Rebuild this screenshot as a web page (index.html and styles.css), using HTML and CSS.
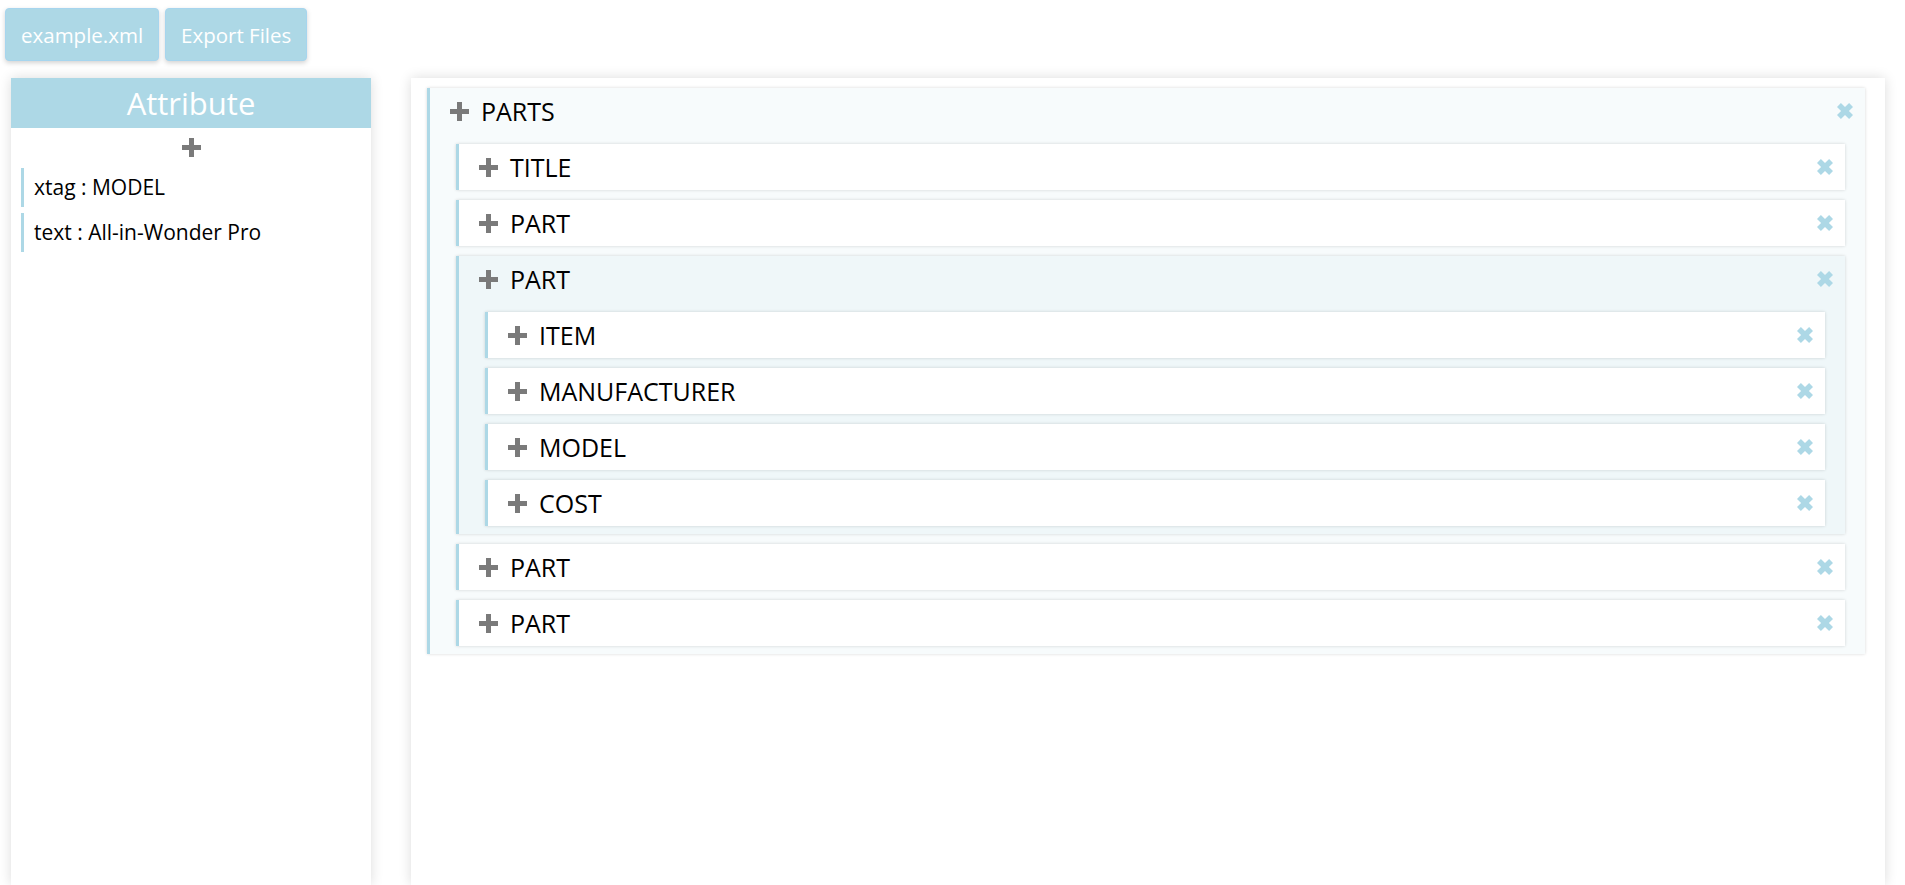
FILE: index.html
```html
<!DOCTYPE html>
<html>
<head>
<meta charset="utf-8">
<link rel="stylesheet" href="styles.css">
</head>
<body>
<svg width="0" height="0" class="defs">
  <defs>
    <symbol id="plus" viewBox="0 0 19 19"><path d="M7 0h5v7h7v5h-7v7h-5v-7h-7v-5h7z"/></symbol>
    <symbol id="close" viewBox="0 0 16 16"><path d="M0 3.9L3.9 0L8 4.1L12.1 0L16 3.9L11.9 8L16 12.1L12.1 16L8 11.9L3.9 16L0 12.1L4.1 8z"/></symbol>
  </defs>
</svg>
<div class="toolbar">
  <button class="btn">example.xml</button>
  <button class="btn">Export Files</button>
</div>
<div class="main">
  <aside class="attr-panel">
    <div class="attr-head">Attribute</div>
    <div class="attr-add"><svg class="ico-plus"><use href="#plus"/></svg></div>
    <div class="attr-row">xtag : MODEL</div>
    <div class="attr-row">text : All-in-Wonder Pro</div>
  </aside>
  <section class="tree-panel">
    <div class="node open">
      <div class="node-head"><svg class="ico-plus"><use href="#plus"/></svg><span class="label">PARTS</span><svg class="ico-close"><use href="#close"/></svg></div>
      <div class="children">
        <div class="node"><div class="node-head"><svg class="ico-plus"><use href="#plus"/></svg><span class="label">TITLE</span><svg class="ico-close"><use href="#close"/></svg></div></div>
        <div class="node"><div class="node-head"><svg class="ico-plus"><use href="#plus"/></svg><span class="label">PART</span><svg class="ico-close"><use href="#close"/></svg></div></div>
        <div class="node open">
          <div class="node-head"><svg class="ico-plus"><use href="#plus"/></svg><span class="label">PART</span><svg class="ico-close"><use href="#close"/></svg></div>
          <div class="children">
            <div class="node"><div class="node-head"><svg class="ico-plus"><use href="#plus"/></svg><span class="label">ITEM</span><svg class="ico-close"><use href="#close"/></svg></div></div>
            <div class="node"><div class="node-head"><svg class="ico-plus"><use href="#plus"/></svg><span class="label">MANUFACTURER</span><svg class="ico-close"><use href="#close"/></svg></div></div>
            <div class="node"><div class="node-head"><svg class="ico-plus"><use href="#plus"/></svg><span class="label">MODEL</span><svg class="ico-close"><use href="#close"/></svg></div></div>
            <div class="node"><div class="node-head"><svg class="ico-plus"><use href="#plus"/></svg><span class="label">COST</span><svg class="ico-close"><use href="#close"/></svg></div></div>
          </div>
        </div>
        <div class="node"><div class="node-head"><svg class="ico-plus"><use href="#plus"/></svg><span class="label">PART</span><svg class="ico-close"><use href="#close"/></svg></div></div>
        <div class="node"><div class="node-head"><svg class="ico-plus"><use href="#plus"/></svg><span class="label">PART</span><svg class="ico-close"><use href="#close"/></svg></div></div>
      </div>
    </div>
  </section>
</div>
</body>
</html>
```
FILE: styles.css
```css
* { box-sizing: border-box; }
html, body { margin: 0; padding: 0; background: #fff; }
body {
  font-family: "Open Sans", "Noto Sans", sans-serif;
  color: #000;
  overflow: hidden;
}
.defs { position: absolute; width: 0; height: 0; }

.toolbar {
  display: flex;
  gap: 6px;
  padding: 8px 0 0 5px;
}
.btn {
  font-family: inherit;
  font-size: 20.5px;
  color: #fff;
  background: #add8e6;
  border: 1px solid #a6d5ee;
  border-radius: 4px;
  height: 53px;
  padding: 0 15px;
  box-shadow: 0 2px 5px rgba(0,0,0,0.18);
}

.main {
  display: flex;
  gap: 40px;
  margin-top: 17px;
  padding-left: 11px;
  padding-right: 20px;
}
.attr-panel {
  width: 360px;
  flex: none;
  min-height: 807px;
  background: #fff;
  box-shadow: 0 0 12px rgba(0,0,0,0.14);
}
.attr-head {
  height: 50px;
  background: #add8e6;
  color: #fff;
  font-size: 31px;
  text-align: center;
  line-height: 50px;
}
.attr-add {
  display: flex;
  justify-content: center;
  padding: 10px 0 10px;
  height: 40px;
}
.attr-row {
  margin: 0 0 6px 10px;
  border-left: 3px solid #add8e6;
  height: 39px;
  line-height: 39px;
  padding-left: 10px;
  font-size: 21px;
}

.tree-panel {
  flex: 1;
  min-height: 807px;
  background: #fff;
  box-shadow: 0 0 12px rgba(0,0,0,0.14);
  padding: 10px 20px 0 16px;
}

.node {
  background: #fff;
  border-left: 3px solid #add8e6;
  box-shadow: 0 0 3px rgba(0,0,0,0.16);
}
.children > .node { margin-top: 10px; }
.node.open { background: rgba(173,216,230,0.1); }
.node-head {
  height: 46px;
  display: flex;
  align-items: center;
  padding: 0 12px 0 20px;
}
.label {
  flex: 1;
  font-size: 25px;
  margin-left: 12px;
  line-height: 46px;
}
.children {
  padding: 0 20px 8px 26px;
}
.ico-plus {
  width: 19px;
  height: 19px;
  fill: #7a7a7a;
  flex: none;
}
.ico-close {
  width: 16px;
  height: 16px;
  fill: #add8e6;
  flex: none;
}
```
